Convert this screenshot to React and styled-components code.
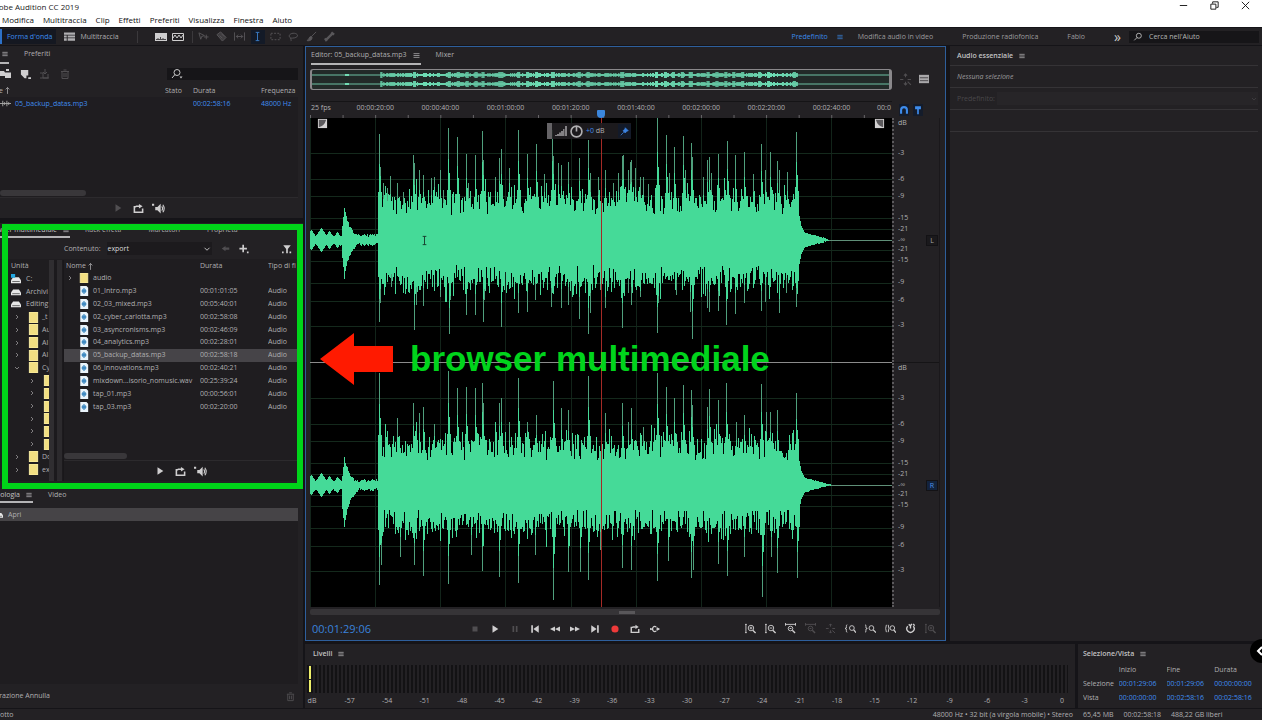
import React from "react";
import styled, { createGlobalStyle, css } from "styled-components";

const GlobalStyle = createGlobalStyle`
  * {
    box-sizing: border-box;
  }

  body {
    margin: 0;
    background: #ffffff;
    font-family: "Open Sans", "Noto Sans", sans-serif;
    font-size: 7px;
    line-height: 12px;
    color: #b0afb1;
  }

  button, input, select {
    margin: 0;
    padding: 0;
    border: 0;
    background: none;
    color: inherit;
    font: inherit;
  }

  table {
    border-collapse: collapse;
    table-layout: fixed;
    width: 100%;
  }

  th, td {
    padding: 0;
    font-weight: normal;
    text-align: left;
    white-space: nowrap;
    overflow: hidden;
  }

  svg {
    display: block;
    flex: none;
  }
`;

/* ---------- icons ---------- */

const shapes = {
  menu: <path d="M2 3.5h8M2 6h8M2 8.5h8" />,
  play: <path d="M3 1.5v9L10 6z" fill="currentColor" stroke="none" />,
  stop: <path d="M3 3h6v6H3z" fill="currentColor" stroke="none" />,
  pause: <path d="M3 2.5h2v7H3zM7 2.5h2v7H7z" fill="currentColor" stroke="none" />,
  first: <path d="M1.500 1.500h2v9h-2zM10.500 1.500v9L4 6z" fill="currentColor" stroke="none" />,
  last: <path d="M8.500 1.500h2v9h-2zM1.500 1.500v9L8 6z" fill="currentColor" stroke="none" />,
  rewind: <path d="M6 3v6L0 6zM12 3v6L6 6z" fill="currentColor" stroke="none" />,
  forward: <path d="M0 3v6l6-3zM6 3v6l6-3z" fill="currentColor" stroke="none" />,
  record: <circle cx="6" cy="6" r="4.3" fill="#ee3a3a" stroke="none" />,
  loop: (
    <>
      <path d="M3.500 4H1.500v6h9V6M3 3.500h4" strokeWidth="1.700" />
      <path d="M6.500 1l4 2.500-4 2.500z" fill="currentColor" stroke="none" />
    </>
  ),
  skip: (
    <>
      <path d="M1 6h3M8 6h3M7.500 3.500A3 3 0 1 0 7.500 8.500" strokeWidth="1.500" />
      <path d="M8 3.500L12 6 8 8.500zM0 4.500L2.500 6 0 7.500z" fill="currentColor" stroke="none" />
    </>
  ),
  speaker: (
    <>
      <path d="M3 4.500h2L8 1.500v9L5 7.500H3zM0 1.500h2v2H0z" fill="currentColor" stroke="none" />
      <path d="M9 4q1.500 2 0 4M10 2.500q2.500 3.500 0 7" />
    </>
  ),
  search: (
    <>
      <circle cx="7" cy="4.500" r="3" />
      <path d="M5 6.500L1.500 10" />
    </>
  ),
  searchMore: (
    <>
      <circle cx="6" cy="4.500" r="3" />
      <path d="M4 6.500L1 10" />
      <path d="M8.500 8.500h3L10 10.500z" fill="currentColor" stroke="none" />
    </>
  ),
  open: <path d="M0 3h4l1 1.500h6V10H5V8H0zM6 1h3v2H6z" fill="currentColor" stroke="none" />,
  addFile: <path d="M1 1h8v6H7v3H5L1 6zM9 9h3v2H9z" fill="currentColor" stroke="none" />,
  insert: <path d="M1 5h3v5h5V6M6 1v5M4 4l2 2 2-2M1 10h9" />,
  trash: <path d="M2 3.500h8M3 3.500v7h6v-7M4.500 2h3M5 5v4M7 5v4" />,
  multitrack: (
    <path d="M0 1.500h12v2.500H0zM0 5h3v2H0zM4 5h8v2H4zM0 8h3v2.500H0zM4 8h8v2.500H4z" fill="currentColor" stroke="none" />
  ),
  spectral: (
    <>
      <path d="M0 2h12v8H0z" fill="#cfcecf" stroke="none" />
      <path d="M1 8.500h10M3 7v2M5.500 6v3M8 7v2" stroke="#4a484b" />
    </>
  ),
  pitch: <path d="M.5 2.500h11v7H.5zM1 7l2-3 2 3 2-3 2 3 2-3" />,
  move: <path d="M1 2l6 3-3 1-1 3zM9 4v5M6.500 6.500h5" />,
  razor: <path d="M1 4l4-3 6 6-4 4zM4 5l3 3M6 3l3 3" fill="currentColor" fillOpacity=".5" />,
  slip: <path d="M.5 1.500v9M11.500 1.500v9M2.500 6h7M4.500 4l-2 2 2 2M7.500 4l2 2-2 2" />,
  beam: <path d="M4 1.500h4M4 10.500h4M6 1.500v9" />,
  marquee: <path d="M1 2.500h10v7H1z" strokeDasharray="2 1.500" />,
  lasso: <path d="M3 8C-1 5 3 2 7 2.500s5 4 0 5S3 6.500 3 8s1 2 0 3" />,
  brush: <path d="M11 1L5.500 6.500M5.500 6C3 6 4 9 1 10.500c3 .5 6-.5 5.500-4" fill="currentColor" />,
  heal: <path d="M2 10l8-8M1 8l2 3M8 1.500L11 4" strokeWidth="2.500" />,
  down: <path d="M3 4.500l3 3 3-3" />,
  right: <path d="M4.500 3l3 3-3 3" />,
  back: <path d="M11 4.500H6V2.500L1 6l5 3.500v-2h5z" fill="currentColor" stroke="none" />,
  plus: <path d="M5 1v9M.5 5.500h9M9.500 10h2" strokeWidth="2" />,
  filter: <path d="M1.500 1.500h9L7 6v5H5V6zM0 9h2v2H0zM9 9h2v2H9z" fill="currentColor" stroke="none" />,
  up: <path d="M6 10.500V2M3.500 4.500L6 2l2.500 2.500" />,
  zoomIn: (
    <>
      <path d="M1 1.500v9M0 1.500h2M0 10.500h2M5 5.500h3M6.500 4v3" />
      <circle cx="6.500" cy="5.500" r="3" />
      <path d="M8.500 8l3 3" strokeWidth="1.500" />
    </>
  ),
  zoomOut: (
    <>
      <path d="M1 1.500v9M0 1.500h2M0 10.500h2M5 5.500h3" />
      <circle cx="6.500" cy="5.500" r="3" />
      <path d="M8.500 8l3 3" strokeWidth="1.500" />
    </>
  ),
  zoomWide: (
    <>
      <path d="M0 1.500h12M.5 0v3M11.500 0v3M5 6h2" />
      <circle cx="6" cy="6" r="2.500" />
      <path d="M8 8l3 3" strokeWidth="1.500" />
    </>
  ),
  zoomFull: <path d="M6 1v3M6 8v3M1 6h3M8 6h3M4.500 2.500L6 1l1.500 1.500M4.500 9.500L6 11l1.500-1.500M8 8l3 3" />,
  zoomStart: (
    <>
      <path d="M2.500 2Q1 2 1.500 4T0 6q2 0 1.500 2t1 2" />
      <circle cx="7.500" cy="5.500" r="2.600" />
      <path d="M9.500 7.500l2.500 3" strokeWidth="1.500" />
    </>
  ),
  zoomEnd: (
    <>
      <path d="M0 2q1.500 0 1 2t1.500 2Q.5 6 1 8t-1 2" />
      <circle cx="7" cy="5.500" r="2.600" />
      <path d="M9 7.500l3 3" strokeWidth="1.500" />
    </>
  ),
  zoomSel: (
    <>
      <path d="M1.500 2q-1.500 4 0 8M3.500 2q1.500 4 0 8" />
      <circle cx="8" cy="5.500" r="2.500" />
      <path d="M9.500 7.500l2.500 3" strokeWidth="1.500" />
    </>
  ),
  timer: <path d="M3 3.500a4 4 0 1 0 6 0M6 2v4M4 1.500l2 1.500 1.500-2M9 1l1.500 2" strokeWidth="1.500" />,
  list: (
    <>
      <path d="M0 1h12v10H0z" fill="#a9a8aa" stroke="none" />
      <path d="M1 4.500h10M1 8h10" stroke="#3b393c" />
    </>
  ),
  magnet: <path d="M2.500 10.500V6a3.500 3.500 0 0 1 7 0v4.500" strokeWidth="2.500" />,
  marker: <path d="M2.500 1.500h7v3.500H7V11H5V5H2.500z" fill="currentColor" stroke="none" />,
  pin: <path d="M7 1l4 4-2 .5L7 8 4 5l2.500-2zM5 7l-4 4" fill="currentColor" />,
  knob: (
    <>
      <circle cx="6" cy="6" r="5" strokeWidth="1.500" />
      <path d="M6 1v5" strokeWidth="1.500" />
    </>
  ),
  bars: <path d="M0 10h2v1H0zM2 9h2v2H2zM4 7.500h2V11H4zM6 6h2v5H6zM8 4h1.500v7H8zM10 1h2v10h-2z" fill="#848285" stroke="none" />,
  clip: <path d="M0 6h12M3 3v6M5 4.500v3M7.500 3v6M9.500 4.500v3" />,
  fadeIn: (
    <>
      <path d="M1 1h10v10H1z" fill="#d4d2d3" stroke="none" />
      <path d="M2 10Q8 9 10 2H2z" fill="#5c5a5d" stroke="none" />
    </>
  ),
  fadeOut: (
    <>
      <path d="M1 1h10v10H1z" fill="#d4d2d3" stroke="none" />
      <path d="M10 10Q4 9 2 2h8z" fill="#5c5a5d" stroke="none" />
    </>
  ),
  folder: <path d="M1.500 0h9v12h-9z" fill="#f2df82" stroke="#fff3a8" />,
  sound: (
    <>
      <path d="M1.500 0h7.500l2 2v10H1.500z" fill="#eaf4fb" stroke="none" />
      <path d="M3 6h6M4.500 4v4M6 2.500v7M7.500 4v4" stroke="#3181bd" strokeWidth="1.300" />
    </>
  ),
  disk: (
    <>
      <path d="M2.500 3h7L12 6.500V10H0V6.500z" fill="#e7e7e7" stroke="none" />
      <path d="M1.500 8h9" stroke="#555" />
    </>
  ),
  system: (
    <>
      <path d="M2.500 4h7L12 7.500V11H0V7.500z" fill="#e7e7e7" stroke="none" />
      <path d="M1.500 9h9" stroke="#555" />
      <path d="M0 0h5v4.500H0z" fill="#22a7e0" stroke="none" />
    </>
  ),
  minimize: <path d="M2 6h8" />,
  restore: <path d="M2 4.500h5.500V10H2zM4 4V2h6v6H8" />,
  close: <path d="M2 2l8 8M10 2l-8 8" />,
};

function Icon({ name, size = 12 }) {
  return (
    <svg width={size} height={size} viewBox="0 0 12 12" fill="none" stroke="currentColor" aria-hidden="true">
      {shapes[name]}
    </svg>
  );
}

/* ---------- waveform data ---------- */

// [x, height] pairs of the loud peaks, measured from the left edge
const peaksLeftUp = [
  [69, 106], [70, 73], [73, 57], [77, 52], [80, 64], [87, 57], [93, 48], [103, 85], [104, 77], [109, 70], [113, 65],
  [121, 62], [124, 63], [130, 70], [133, 50], [138, 112], [147, 103], [156, 86], [158, 57], [165, 85], [172, 109],
  [173, 80], [185, 63], [189, 82], [191, 91], [199, 72], [208, 110], [217, 86], [226, 96], [234, 66], [242, 110],
  [243, 84], [248, 77], [251, 75], [258, 78], [269, 82], [278, 100], [280, 67], [288, 63], [295, 70], [303, 57],
  [308, 67], [312, 84], [320, 78], [325, 72], [313, 85], [318, 70], [321, 80], [330, 63], [333, 63], [338, 56],
  [347, 122], [356, 105], [359, 67], [364, 93], [373, 104], [375, 70], [381, 97], [382, 83], [393, 63], [397, 80],
  [399, 83], [401, 67], [408, 86], [417, 99], [425, 85], [434, 88], [443, 66], [451, 96], [455, 70], [460, 88],
  [467, 79], [469, 70], [477, 68], [486, 108],
];
const peaksLeftDown = [
  [69, 82], [70, 63], [81, 47], [104, 90], [106, 65], [113, 66], [130, 57], [139, 94], [140, 60], [156, 75],
  [165, 75], [173, 82], [174, 60], [191, 87], [208, 73], [217, 72], [225, 60], [241, 67], [251, 68], [258, 65],
  [269, 79], [278, 94], [280, 73], [290, 50], [295, 68], [312, 88], [318, 53], [321, 65], [330, 57], [347, 93],
  [348, 63], [366, 55], [380, 72], [382, 99], [397, 68], [399, 72], [408, 71], [416, 85], [425, 74], [434, 63],
  [451, 71], [455, 62], [469, 73], [476, 53], [486, 67],
];
const peaksRightUp = [
  [69, 112], [70, 65], [87, 67], [103, 82], [109, 72], [113, 78], [124, 61], [138, 114], [147, 97], [156, 98],
  [165, 97], [172, 102], [173, 82], [189, 82], [191, 87], [199, 63], [208, 107], [217, 63], [226, 70], [243, 104],
  [251, 77], [258, 75], [278, 109], [295, 72], [312, 82], [318, 63], [321, 77], [333, 58], [347, 112], [356, 98],
  [364, 87], [373, 100], [381, 95], [382, 80], [397, 78], [399, 96], [408, 85], [416, 102], [426, 63], [434, 70],
  [451, 101], [456, 73], [460, 73], [467, 75], [486, 92],
];
const peaksRightDown = [
  [69, 100], [71, 80], [90, 72], [104, 80], [113, 91], [138, 99], [161, 70], [172, 86], [189, 92], [208, 98],
  [225, 70], [243, 115], [258, 87], [270, 87], [278, 95], [290, 65], [312, 83], [321, 85], [347, 96], [358, 76],
  [381, 93], [383, 85], [408, 79], [417, 91], [434, 72], [452, 112], [461, 72], [467, 88], [487, 93],
];

function makeRandom(seed) {
  let s = seed;
  return () => {
    s = (s * 16807) % 2147483647;
    return s / 2147483647;
  };
}

function tailHeight(x, noise) {
  if (x < 491) return 24 - (x - 489) * 5;
  if (x < 494) return 14 - (x - 491) * 2;
  return Math.max(0, 7 - (x - 494) * 0.28 + noise);
}

function introHeight(x, burst, noise) {
  let h = 3 + noise * 3;
  [[1, 10], [11, 12], [19, 9], [27, 8], [54, 6], [62, 6]].forEach(([at, top]) => {
    h = Math.max(h, top - Math.abs(x - at) * 1.5);
  });
  if (x > 31 && x < 50) {
    const d = x - 34;
    h = Math.max(h, d < 0 ? burst + d * 9 : burst / (1 + d * 0.22) - d * 0.5 + noise * 3);
  }
  return h;
}

function buildHalf(peaks, seed, burst) {
  const rand = makeRandom(seed);
  const body = [];
  for (let x = 0; x < 522; x++) {
    let h;
    if (x < 69) {
      h = introHeight(x, burst, rand());
    } else if (x < 489) {
      h = 25 + rand() * 21;
      if (rand() > 0.7) h += 8;
      if (rand() > 0.86) h += 10;
    } else {
      h = tailHeight(x, rand());
    }
    body.push(h);
  }
  // small shoulders round every peak
  peaks.forEach(([x, h]) => {
    body[x - 1] = Math.max(body[x - 1], h * 0.45);
    body[x + 1] = Math.max(body[x + 1], h * 0.6);
    body[x + 2] = Math.max(body[x + 2], h * 0.45);
    body[x] = Math.max(body[x], h * 0.72);
  });
  return body;
}

const channels = [
  {
    mid: 122,
    up: buildHalf(peaksLeftUp, 11, 32),
    down: buildHalf(peaksLeftDown, 23, 36),
    peaksUp: peaksLeftUp,
    peaksDown: peaksLeftDown,
  },
  {
    mid: 367,
    up: buildHalf(peaksRightUp, 37, 27),
    down: buildHalf(peaksRightDown, 53, 42),
    peaksUp: peaksRightUp,
    peaksDown: peaksRightDown,
  },
];

const gridRows = [35, 61, 78, 100, 111, 132, 143, 165, 183, 208];
const gridCols = [0, 65, 130, 195, 261, 326, 391, 456, 521];

function Waveform() {
  return (
    <WaveSvg viewBox="0 0 582 489" preserveAspectRatio="none" shapeRendering="crispEdges">
      {gridCols.map((x) => (
        <path key={x} d={`M${x + 0.5} 0V489`} stroke="#12241a" />
      ))}
      {channels.map((c) => (
        <g key={c.mid}>
          {gridRows.map((y) => (
            <path key={y} d={`M0 ${c.mid - 122 + y + 0.5}H582`} stroke="#14291c" />
          ))}
          <path d={`M0 ${c.mid + 0.5}H582`} stroke="#5f8f78" />
          <path
            d={
              c.peaksUp.map(([x, h]) => `M${x + 0.5} ${c.mid}v${-h}`).join("") +
              c.peaksDown.map(([x, h]) => `M${x + 0.5} ${c.mid}v${h}`).join("")
            }
            stroke="#4f9f7c"
          />
          <path
            d={c.up.map((h, x) => `M${x + 0.5} ${c.mid - Math.round(h)}V${c.mid + Math.round(c.down[x])}`).join("")}
            stroke="#45da98"
          />
        </g>
      ))}
      <path d="M0 244.500H582" stroke="#8b8b8b" />
    </WaveSvg>
  );
}

function Overview() {
  const rand = makeRandom(7);
  const bars = [];
  for (let x = 69; x < 490; x++) {
    const near = channels[0].peaksUp.some(([p, h]) => h > 80 && Math.abs(p - x) < 2);
    const h = near ? 3 : 1 + Math.round(rand());
    bars.push(`M${x + 0.5} ${5 - h}v${h * 2}M${x + 0.5} ${14 - h}v${h * 2}`);
  }
  return (
    <OverviewSvg viewBox="0 0 582 19" preserveAspectRatio="none" shapeRendering="crispEdges">
      <path d="M0 5H582M0 14H582" stroke="#6ec3a4" />
      <path d="M33 4h4v2h-4zM33 13h4v2h-4z" fill="#72dcb4" />
      <path d={bars.join("")} stroke="#6fe0b6" />
    </OverviewSvg>
  );
}

/* ---------- page data ---------- */

const menus = ["Modifica", "Multitraccia", "Clip", "Effetti", "Preferiti", "Visualizza", "Finestra", "Aiuto"];

const files = [
  ["01_Intro.mp3", "00:01:01:05"],
  ["02_03_mixed.mp3", "00:05:40:01"],
  ["02_cyber_carlotta.mp3", "00:02:58:08"],
  ["03_asyncronisms.mp3", "00:02:46:09"],
  ["04_analytics.mp3", "00:02:28:01"],
  ["05_backup_datas.mp3", "00:02:58:18"],
  ["06_innovations.mp3", "00:02:40:21"],
  ["mixdown...isorio_nomusic.wav", "00:25:39:24"],
  ["tap_01.mp3", "00:00:56:01"],
  ["tap_03.mp3", "00:02:20:00"],
];

const tree = [
  ["system", "C:", 0],
  ["disk", "Archivi", 0],
  ["disk", "Editing", 0],
  ["folder", "_t", 1],
  ["folder", "Au", 1],
  ["folder", "Al", 1],
  ["folder", "Al", 1],
  ["folder", "Cy", 1, true],
  ["folder", "", 2],
  ["folder", "", 2],
  ["folder", "", 2],
  ["folder", "", 2],
  ["folder", "", 2],
  ["folder", "", 2],
  ["folder", "Do", 1],
  ["folder", "ex", 1],
];

const times = [
  "00:00:20:00", "00:00:40:00", "00:01:00:00", "00:01:20:00",
  "00:01:40:00", "00:02:00:00", "00:02:20:00", "00:02:40:00",
];

// label and the space down to the next one
const decibels = [
  ["", 5], ["dB", 30], ["-3", 26], ["-6", 17], ["-9", 22], ["-15", 11], ["-21", 11], ["-∞", 10],
  ["-21", 11], ["-15", 22], ["-9", 18], ["-6", 25], ["-3", 37],
];

const levels = ["dB"];
for (let v = -57; v <= 0; v += 3) levels.push(String(v));

/* ---------- sections ---------- */

function FilesPanel() {
  return (
    <Panel>
      <Tabs>
        <Tab $active $lead={9}><Icon name="menu" size={8} /></Tab>
        <Tab>Preferiti</Tab>
      </Tabs>
      <FileTools>
        <IconButton aria-label="Apri file"><Icon name="open" /></IconButton>
        <IconButton aria-label="Nuovo file"><Icon name="addFile" size={11} /></IconButton>
        <IconButton aria-label="Inserisci" $dim><Icon name="insert" /></IconButton>
        <IconButton aria-label="Elimina" $dim><Icon name="trash" /></IconButton>
        <SearchBox>
          <Icon name="searchMore" />
          <input aria-label="Cerca file" />
        </SearchBox>
      </FileTools>
      <FilesTable>
        <colgroup>
          <col />
          <col width="28" />
          <col width="68" />
          <col width="37" />
        </colgroup>
        <thead>
          <tr>
            <th><LeadText $width={12}>Nome <Icon name="up" size={9} /></LeadText></th>
            <th>Stato</th>
            <th>Durata</th>
            <th>Frequenza</th>
          </tr>
        </thead>
        <tbody>
          <tr>
            <td><FileName><Icon name="clip" size={11} />05_backup_datas.mp3</FileName></td>
            <td />
            <td>00:02:58:16</td>
            <td>48000 Hz</td>
          </tr>
        </tbody>
      </FilesTable>
      <FilesSpace />
      <ScrollTrack><ScrollThumb $width="29%" /></ScrollTrack>
      <Preview $start={108} $off />
    </Panel>
  );
}

function Preview({ $start, $off }) {
  return (
    <PreviewBar $start={$start}>
      <IconButton aria-label="Riproduci" $dim={$off}><Icon name="play" size={10} /></IconButton>
      <IconButton aria-label="Ciclo"><Icon name="loop" size={11} /></IconButton>
      <IconButton aria-label="Riproduzione automatica"><Icon name="speaker" size={13} /></IconButton>
    </PreviewBar>
  );
}

function MediaBrowser() {
  return (
    <MediaPanel>
      <Tabs $short>
        <Tab $active $lead={70}>Browser multimediale<Icon name="menu" size={8} /></Tab>
        <Tab>Rack effetti</Tab>
        <Tab $wide>Marcatori</Tab>
        <Tab $wide>Proprietà</Tab>
      </Tabs>
      <ContentBar>
        <label htmlFor="content">Contenuto:</label>
        <ContentSelect>
          <select id="content" defaultValue="export"><option>export</option></select>
          <Icon name="down" size={10} />
        </ContentSelect>
        <IconButton aria-label="Indietro" $dim><Icon name="back" size={9} /></IconButton>
        <IconButton aria-label="Aggiungi"><Icon name="plus" size={10} /></IconButton>
        <FilterButton aria-label="Filtra"><Icon name="filter" size={10} /></FilterButton>
      </ContentBar>
      <MediaBody>
        <Tree>
          <TreeRow $depth={0}>Unità</TreeRow>
          {tree.map(([icon, name, depth, open], i) => (
            <TreeRow key={i} $depth={depth}>
              {depth > 0 && <Icon name={open ? "down" : "right"} size={8} />}
              <Icon name={icon} size={depth ? 11 : 10} />
              <span>{name}</span>
            </TreeRow>
          ))}
        </Tree>
        <Splitter><i /></Splitter>
        <MediaList>
          <MediaTable>
            <colgroup>
              <col />
              <col width="68" />
              <col width="29" />
            </colgroup>
            <thead>
              <tr>
                <th><NameHead>Nome<Icon name="up" size={9} /></NameHead></th>
                <th>Durata</th>
                <th>Tipo di fi</th>
              </tr>
            </thead>
            <tbody>
              <tr>
                <td><MediaName><Icon name="right" size={8} /><Icon name="folder" size={10} />audio</MediaName></td>
                <td />
                <td />
              </tr>
              {files.map(([name, length], i) => (
                <MediaRow key={name} $selected={i === 5}>
                  <td><MediaName $file><Icon name="sound" size={10} />{name}</MediaName></td>
                  <td>{length}</td>
                  <td>Audio</td>
                </MediaRow>
              ))}
            </tbody>
          </MediaTable>
          <MediaSpace />
          <ScrollTrack><ScrollThumb $width="27%" /></ScrollTrack>
          <Preview $start={86} />
        </MediaList>
      </MediaBody>
      <GreenFrame />
    </MediaPanel>
  );
}

function History() {
  return (
    <HistoryPanel>
      <Tabs $short>
        <Tab $active $lead={33}>Cronologia<Icon name="menu" size={8} /></Tab>
        <Tab>Video</Tab>
      </Tabs>
      <HistoryList>
        <HistoryItem><LeadText $width={3}><Icon name="disk" size={8} /></LeadText>Apri</HistoryItem>
      </HistoryList>
      <HistoryFoot>
        <LeadText $width={50}>Operazione Annulla</LeadText>
        <IconButton aria-label="Elimina cronologia" $dim><Icon name="trash" size={11} /></IconButton>
      </HistoryFoot>
    </HistoryPanel>
  );
}

const transport = [
  ["stop", "Arresta", true], ["play", "Riproduci"], ["pause", "Pausa", true], ["first", "Inizio"],
  ["rewind", "Riavvolgi"], ["forward", "Avanti veloce"], ["last", "Fine"], ["record", "Registra"],
  ["loop", "Riproduzione ciclica"], ["skip", "Salta selezione"],
];

const zooms = [
  ["zoomIn", "Zoom avanti"], ["zoomOut", "Zoom indietro"], ["zoomWide", "Zoom tempo"], ["zoomWide", "Zoom tempo indietro", true],
  ["zoomFull", "Zoom completo", true], ["zoomStart", "Zoom punto iniziale"], ["zoomEnd", "Zoom punto finale"],
  ["zoomSel", "Zoom selezione"], ["timer", "Zoom temporizzato"], ["zoomIn", "Zoom traccia", true],
];

function Editor() {
  return (
    <EditorPanel>
      <Tabs>
        <EditorTab $active>Editor: 05_backup_datas.mp3<Icon name="menu" size={9} /></EditorTab>
        <EditorTab>Mixer</EditorTab>
      </Tabs>
      <OverviewRow>
        <OverviewBox><Overview /></OverviewBox>
        <EditorSide $gap={7}>
          <IconButton aria-label="Adatta" $dim><Icon name="zoomFull" size={13} /></IconButton>
          <IconButton aria-label="Elenco"><Icon name="list" size={10} /></IconButton>
        </EditorSide>
      </OverviewRow>
      <TimeRow>
        <TimeRuler>
          <TimeStart>25 fps</TimeStart>
          {times.map((t) => <TimeMark key={t}>{t}</TimeMark>)}
          <TimeEnd>00:0</TimeEnd>
          <PlayheadTop />
        </TimeRuler>
        <EditorSide $gap={4} $blue>
          <BlueButton aria-label="Aggancia"><Icon name="magnet" size={10} /></BlueButton>
          <BlueButton aria-label="Marcatore"><Icon name="marker" size={10} /></BlueButton>
        </EditorSide>
      </TimeRow>
      <WaveRow>
        <WaveBox>
          <Waveform />
          <Playhead />
          <FadeHandle $side="left"><Icon name="fadeIn" size={11} /></FadeHandle>
          <FadeHandle $side="right"><Icon name="fadeOut" size={11} /></FadeHandle>
          <Hud>
            <HudGrip />
            <Icon name="bars" />
            <Icon name="knob" size={13} />
            <span><b>+0</b> dB</span>
            <HudPin aria-label="Blocca"><Icon name="pin" size={9} /></HudPin>
          </Hud>
          <Cursor><Icon name="beam" size={11} /></Cursor>
          <Note>
            <svg width="73" height="52" viewBox="0 0 73 52">
              <path d="M0 26L34 0v13h39v26H34v13z" fill="#ff1a00" />
            </svg>
            browser multimediale
          </Note>
        </WaveBox>
        <ScaleSide>
          {["L", "R"].map((side) => (
            <ScaleChannel key={side}>
              <Scale>
                {decibels.map(([label, space], i) => <ScaleMark key={i} $space={space}>{label}</ScaleMark>)}
              </Scale>
              <ChannelButton $on={side === "R"}>{side}</ChannelButton>
            </ScaleChannel>
          ))}
        </ScaleSide>
      </WaveRow>
      <WaveScroll><i /></WaveScroll>
      <TransportRow>
        <Clock>00:01:29:06</Clock>
        <ButtonGroup>
          {transport.map(([icon, label, dim]) => (
            <IconButton key={label} aria-label={label} $dim={dim} $cell><Icon name={icon} size={10} /></IconButton>
          ))}
        </ButtonGroup>
        <ButtonGroup $end>
          {zooms.map(([icon, label, dim]) => (
            <IconButton key={label} aria-label={label} $dim={dim} $cell><Icon name={icon} size={11} /></IconButton>
          ))}
        </ButtonGroup>
      </TransportRow>
    </EditorPanel>
  );
}

function Essential() {
  return (
    <EssentialPanel>
      <PanelTitle>Audio essenziale<Icon name="menu" size={8} /></PanelTitle>
      <EssentialLine $italic>Nessuna selezione</EssentialLine>
      <EssentialLine $faint>
        <label htmlFor="preset">Predefinito:</label>
        <PresetSelect>
          <select id="preset" disabled><option></option></select>
          <Icon name="down" size={8} />
        </PresetSelect>
      </EssentialLine>
      <EssentialLine />
      <EssentialLine />
    </EssentialPanel>
  );
}

function App() {
  return (
    <Window>
      <GlobalStyle />
      <TitleBar>
        <LeadText $width={79}>Adobe Audition CC 2019</LeadText>
        <WindowButtons>
          <button aria-label="Riduci a icona"><Icon name="minimize" size={11} /></button>
          <button aria-label="Ripristina"><Icon name="restore" size={11} /></button>
          <button aria-label="Chiudi"><Icon name="close" size={11} /></button>
        </WindowButtons>
      </TitleBar>
      <MenuBar>{menus.map((m) => <button key={m}>{m}</button>)}</MenuBar>
      <Program>
        <Toolbar>
          <ModeButton $active>Forma d'onda</ModeButton>
          <ModeButton><Icon name="multitrack" size={11} />Multitraccia</ModeButton>
          <Divider $gap={14} />
          <ViewTools>
            <IconButton aria-label="Frequenza spettrale"><Icon name="spectral" /></IconButton>
            <IconButton aria-label="Tono spettrale"><Icon name="pitch" /></IconButton>
          </ViewTools>
          <Divider $gap={0} />
          {["move", "razor", "slip", "beam", "marquee", "lasso", "brush", "heal"].map((t) => (
            <ToolButton key={t} aria-label={t} $active={t === "beam"}><Icon name={t} size={11} /></ToolButton>
          ))}
          <Workspaces>
            <WorkButton $active>Predefinito<Icon name="menu" size={8} /></WorkButton>
            <WorkButton>Modifica audio in video</WorkButton>
            <WorkButton>Produzione radiofonica</WorkButton>
            <WorkButton>Fabio</WorkButton>
            <MoreButton>»</MoreButton>
            <HelpSearch>
              <Icon name="search" size={10} />
              <input aria-label="Cerca" placeholder="Cerca nell'Aiuto" />
            </HelpSearch>
          </Workspaces>
        </Toolbar>
        <Main>
          <LeftColumn>
            <FilesPanel />
            <MediaBrowser />
            <History />
          </LeftColumn>
          <RightColumn>
            <UpperRow>
              <Editor />
              <Essential />
            </UpperRow>
            <LowerRow>
              <LevelsPanel>
                <PanelTitle>Livelli<Icon name="menu" size={8} /></PanelTitle>
                <Meter><i /><i /></Meter>
                <LevelScale>{levels.map((l) => <span key={l}>{l}</span>)}</LevelScale>
              </LevelsPanel>
              <SelectionPanel>
                <PanelTitle>Selezione/Vista<Icon name="menu" size={8} /></PanelTitle>
                <SelectionTable>
                  <thead>
                    <tr><td /><th>Inizio</th><th>Fine</th><th>Durata</th></tr>
                  </thead>
                  <tbody>
                    <tr><th>Selezione</th><td>00:01:29:06</td><td>00:01:29:06</td><td>00:00:00:00</td></tr>
                    <tr><th>Vista</th><td>00:00:00:00</td><td>00:02:58:16</td><td>00:02:58:16</td></tr>
                  </tbody>
                </SelectionTable>
              </SelectionPanel>
            </LowerRow>
          </RightColumn>
        </Main>
        <Status>
          <span>otto</span>
          <span>48000 Hz • 32 bit (a virgola mobile) • Stereo</span>
          <StatusEnd>
            <span>65,45 MB</span>
            <span>00:02:58:18</span>
            <span>488,22 GB liberi</span>
          </StatusEnd>
        </Status>
        <SideHandle aria-label="Apri pannello">
          <svg width="8" height="12" viewBox="0 0 8 12" fill="none" stroke="#fff" strokeWidth="2">
            <path d="M7 2L3 6l4 4" />
          </svg>
        </SideHandle>
      </Program>
    </Window>
  );
}

/* ---------- styles ---------- */

const Window = styled.div`
  display: flex;
  flex-direction: column;
  min-height: 100vh;
  overflow: hidden;
`;

const LeadText = styled.span`
  display: flex;
  flex: none;
  align-items: center;
  justify-content: flex-end;
  width: ${(p) => p.$width}px;
  overflow: hidden;
  white-space: nowrap;
`;

const TitleBar = styled.div`
  display: flex;
  justify-content: space-between;
  height: 13px;
  font-size: 8px;
  line-height: 11px;
  color: #222;
`;

const WindowButtons = styled.div`
  display: flex;
  gap: 20px;
  padding-right: 29px;
  color: #111;

  button {
    display: flex;
    align-items: center;
    height: 11px;
  }
`;

const MenuBar = styled.nav`
  display: flex;
  gap: 9px;
  height: 14px;
  padding-left: 2px;
  font-size: 8px;
  color: #111;
`;

const Program = styled.div`
  position: relative;
  display: flex;
  flex-direction: column;
  flex: 1;
  margin-right: 18px;
  background: #151418;
  overflow: hidden;
`;

const Toolbar = styled.div`
  display: flex;
  align-items: center;
  height: 18px;
  background: #232124;
  border-top: 1px solid #151418;
  white-space: nowrap;
`;

const ModeButton = styled.button`
  display: flex;
  align-items: center;
  gap: 5px;
  height: 15px;
  padding: 0 4px 0 7px;
  ${(p) => p.$active && css`
    background: #151821;
    border-left: 2px solid #2d71c8;
    color: #3b8cf0;
    padding-left: 5px;
    margin-right: 1px;
  `}
`;

const Divider = styled.div`
  width: 1px;
  height: 12px;
  margin-left: ${(p) => p.$gap}px;
  background: #3b393c;
`;

const ViewTools = styled.div`
  display: flex;
  gap: 5px;
  padding: 0 8px 0 17px;
`;

const ToolButton = styled.button`
  display: flex;
  align-items: center;
  justify-content: center;
  width: 14px;
  height: 14px;
  margin-left: 4px;
  color: #59575a;
  ${(p) => p.$active && css`
    background: #131a27;
    color: #3b7fca;
  `}
`;

const Workspaces = styled.div`
  display: flex;
  align-items: center;
  margin-left: auto;
  padding-right: 3px;
`;

const WorkButton = styled.button`
  display: flex;
  align-items: center;
  gap: 8px;
  margin-right: ${(p) => (p.$active ? 14 : 29)}px;
  color: ${(p) => (p.$active ? "#3b8bea" : "#9c9b9d")};
`;

const MoreButton = styled.button`
  margin-right: 8px;
  font-size: 14px;
  line-height: 14px;
  color: #cccccc;
`;

const SearchBox = styled.label`
  display: flex;
  align-items: center;
  flex: 1;
  height: 12px;
  margin-left: 88px;
  padding-left: 4px;
  background: #161518;
  color: #c8c8c8;

  input {
    flex: 1;
    min-width: 0;
    outline: 0;
  }
`;

const HelpSearch = styled(SearchBox)`
  flex: 0 0 130px;
  margin-left: 0;
  gap: 6px;

  input::placeholder {
    color: #b5b5b5;
    opacity: 1;
  }
`;

const IconButton = styled.button`
  display: flex;
  align-items: center;
  justify-content: center;
  width: ${(p) => (p.$cell ? "20px" : "auto")};
  color: ${(p) => (p.$dim ? "#504e51" : "#cfcecf")};
`;

const Main = styled.div`
  display: flex;
  flex: 1;
  gap: 2px;
  padding-top: 1px;
`;

const LeftColumn = styled.div`
  display: flex;
  flex-direction: column;
  flex: 0 0 303px;
  min-width: 0;
`;

const RightColumn = styled.div`
  display: flex;
  flex: 1;
  flex-direction: column;
  gap: 3px;
  min-width: 0;
`;

const Panel = styled.section`
  display: flex;
  flex-direction: column;
  padding-right: 5px;
  margin-bottom: 5px;
  background: #232124;
`;

const Tabs = styled.div`
  display: flex;
  height: ${(p) => (p.$short ? 15 : 18)}px;
`;

const Tab = styled.button`
  display: flex;
  align-items: center;
  justify-content: flex-end;
  gap: 5px;
  height: 100%;
  margin-left: ${(p) => (p.$active ? 0 : p.$wide ? 27 : 15)}px;
  border-bottom: 2px solid ${(p) => (p.$active ? "#b5b4b6" : "transparent")};
  white-space: nowrap;
  ${(p) => p.$lead && css`
    flex: none;
    width: ${p.$lead}px;
    overflow: hidden;
    color: #c4c3c5;
  `}
`;

const FileTools = styled.div`
  display: flex;
  align-items: center;
  gap: 8px;
  height: 20px;
`;

const FilesTable = styled.table`
  th {
    height: 13px;
  }

  td {
    height: 13px;
    background: #1f1d21;
    color: #3f8df0;
  }
`;

const FileName = styled.span`
  display: flex;
  align-items: center;
  gap: 4px;

  svg {
    color: #aaa;
  }
`;

const FilesSpace = styled.div`
  height: 80px;
  background: #1f1d20;
`;

const ScrollTrack = styled.div`
  height: 7px;
  background: #1f1d20;
`;

const ScrollThumb = styled.div`
  width: ${(p) => p.$width};
  height: 6px;
  border-radius: 3px;
  background: #39373a;
`;

const PreviewBar = styled.div`
  display: flex;
  align-items: center;
  gap: 10px;
  height: 21px;
  padding-left: ${(p) => p.$start + 5}px;
  border-top: 1px solid #2c2a2d;

  button + button + button {
    margin-left: -2px;
  }
`;

const MediaPanel = styled(Panel)`
  position: relative;
  padding: 0 6px 7px 0;
  margin: 0;
`;

const GreenFrame = styled.div`
  position: absolute;
  inset: 1px 0 -1px 2px;
  border: 6px solid #00d419;
  pointer-events: none;
`;

const ContentBar = styled.div`
  display: flex;
  align-items: center;
  gap: 9px;
  height: 21px;
  padding: 0 5px 0 64px;
`;

const ContentSelect = styled.div`
  display: flex;
  align-items: center;
  flex: 0 0 105px;
  height: 13px;
  margin-left: -2px;
  background: #1c1a1d;
  color: #dadada;

  select {
    flex: 1;
    appearance: none;
    outline: 0;
  }
`;

const FilterButton = styled(IconButton)`
  margin-left: auto;
`;

const MediaBody = styled.div`
  display: flex;
  padding-top: 1px;
  background: #1f1d20;
`;

const Tree = styled.div`
  display: flex;
  flex: 0 0 49px;
  flex-direction: column;
  height: 216px;
  padding-left: 11px;
  overflow: hidden;
`;

const TreeRow = styled.div`
  display: flex;
  flex: 1;
  align-items: center;
  gap: ${(p) => (p.$depth ? 3 : 5)}px;
  padding-left: ${(p) => (p.$depth === 2 ? 17 : p.$depth ? 2 : 0)}px;
  line-height: 12px;
  white-space: nowrap;

  svg + svg {
    margin-left: 4px;
  }
`;

const Splitter = styled.div`
  display: flex;
  justify-content: space-between;
  flex: 0 0 15px;
  border-left: 5px solid #302e31;
  border-right: 1px solid #19171a;
  background: #1c1a1d;

  i {
    width: 5px;
    margin-left: 3px;
    background: #2c2a2d;
  }
`;

const MediaList = styled.div`
  flex: 1;
  min-width: 0;
`;

const MediaTable = styled.table`
  height: 153px;
  border-collapse: separate;
  border-spacing: 0;

  th, td {
    height: 12px;
    line-height: 12px;
  }
`;

const MediaRow = styled.tr`
  background: ${(p) => (p.$selected ? "#464448" : "transparent")};
`;

const NameHead = styled.span`
  display: flex;
  align-items: center;
  padding-left: 2px;
`;

const MediaName = styled.span`
  display: flex;
  align-items: center;
  gap: 4px;
  padding-left: ${(p) => (p.$file ? 15 : 2)}px;

  svg + svg {
    margin-left: 1px;
  }
`;

const MediaSpace = styled.div`
  height: 40px;
`;

const HistoryPanel = styled(Panel)`
  flex: 1;
  margin: 0;
`;

const HistoryList = styled.div`
  flex: 1;
  margin-top: 5px;
  background: #1f1d20;
`;

const HistoryItem = styled.div`
  display: flex;
  align-items: center;
  gap: 5px;
  height: 13px;
  background: #464447;
`;

const HistoryFoot = styled.div`
  display: flex;
  align-items: center;
  justify-content: space-between;
  height: 24px;
  padding-right: 2px;
`;

const UpperRow = styled.div`
  display: flex;
  flex: 1;
  gap: 4px;
`;

const EditorPanel = styled.section`
  display: flex;
  flex: 1;
  flex-direction: column;
  min-width: 0;
  padding: 0 5px 0 4px;
  border: 1px solid #2e5f9c;
  background: #232124;
`;

const EditorTab = styled(Tab)`
  gap: 5px;
  margin-left: ${(p) => (p.$active ? 1 : 15)}px;
`;

const OverviewRow = styled.div`
  display: flex;
  align-items: center;
  height: 28px;
`;

const OverviewBox = styled.div`
  flex: 1;
  min-width: 0;
  border: 1px solid #8a888b;
  border-left-width: 2px;
  border-right-width: 3px;
  border-radius: 3px;
  background: #222a28;
`;

const OverviewSvg = styled.svg`
  width: 100%;
  height: 19px;
`;

const EditorSide = styled.div`
  display: flex;
  align-items: center;
  flex: 0 0 48px;
  gap: ${(p) => p.$gap}px;
  padding-left: 7px;
`;

const BlueButton = styled(IconButton)`
  padding: 1px 0;
  background: #141c2b;
  color: #3e8cec;
`;

const TimeRow = styled.div`
  display: flex;
  align-items: center;
  height: 25px;
  padding-top: 8px;
`;

const TimeRuler = styled.div`
  position: relative;
  display: flex;
  flex: 1;
  min-width: 0;
  height: 17px;
  border-top: 1px solid #151416;
  background: linear-gradient(90deg, #6a686b 1px, transparent 1px) 0 100% / 5.600% 3px repeat-x;
`;

const TimeStart = styled.div`
  flex: 56 0 0;
  text-indent: 1px;
  white-space: nowrap;
`;

const TimeMark = styled.div`
  flex: 112 0 0;
  min-width: 0;
  text-align: center;
`;

const TimeEnd = styled.div`
  flex: 48 0 0;
  min-width: 0;
  text-indent: 13px;
  overflow: hidden;
`;

const PlayheadTop = styled.div`
  position: absolute;
  bottom: 0;
  left: calc(50% - 4px);
  width: 8px;
  height: 8px;
  border-radius: 1px 1px 4px 4px;
  background: #3b86dc;
`;

const WaveRow = styled.div`
  display: flex;
  flex: 1;
`;

const WaveBox = styled.div`
  position: relative;
  flex: 1;
  min-width: 0;
  background: #000;
`;

const WaveSvg = styled.svg`
  position: absolute;
  width: 100%;
  height: 100%;
`;

const Playhead = styled.div`
  position: absolute;
  top: 0;
  bottom: 0;
  left: 50%;
  width: 1px;
  background: #a52a26;
`;

const FadeHandle = styled.div`
  position: absolute;
  top: 0;
  ${(p) => p.$side}: 7px;
`;

const Hud = styled.div`
  position: absolute;
  top: 5px;
  left: 237px;
  display: flex;
  align-items: center;
  gap: 3px;
  width: 84px;
  height: 16px;
  background: rgba(31, 29, 32, 0.9);

  b {
    font-weight: normal;
    color: #3f8cf0;
  }
`;

const HudGrip = styled.div`
  align-self: stretch;
  width: 5px;
  background: #656366;
`;

const HudPin = styled.button`
  display: flex;
  align-items: center;
  justify-content: center;
  width: 13px;
  height: 14px;
  margin-left: auto;
  background: #131a29;
  color: #3c82df;
`;

const Cursor = styled.div`
  position: absolute;
  top: 117px;
  left: 109px;
  color: #16382a;
`;

const Note = styled.div`
  position: absolute;
  top: 50%;
  left: 10px;
  display: flex;
  align-items: center;
  gap: 17px;
  margin-top: -30px;
  font: bold 35px/52px "Liberation Sans", Arial, sans-serif;
  color: #00d41c;
  white-space: nowrap;
`;

const ScaleSide = styled.div`
  display: flex;
  flex: 0 0 48px;
  flex-direction: column;
  border-right: 1px solid #1a181b;
`;

const ScaleChannel = styled.div`
  display: flex;
  align-items: center;
  flex: 1;

  & + & {
    border-top: 1px solid #151416;
  }
`;

const Scale = styled.div`
  display: flex;
  flex-direction: column;
  align-self: stretch;
  width: 34px;
  border-left: 2px dotted #5c5a5d;
`;

const ScaleMark = styled.div`
  flex: ${(p) => p.$space} 0 0;
  padding-left: 4px;
  line-height: 0;
`;

const ChannelButton = styled.button`
  width: 12px;
  height: 11px;
  border: 1px solid #131215;
  background: ${(p) => (p.$on ? "#13233c" : "#1a191c")};
  color: ${(p) => (p.$on ? "#4c93ea" : "#a5a5a5")};
  line-height: 9px;
`;

const WaveScroll = styled.div`
  display: flex;
  height: 6px;
  margin-top: 2px;
  border-radius: 2px;
  background: #363437;

  i {
    width: 16px;
    margin: 2px 0 1px 49%;
    background: #59575a;
  }
`;

const TransportRow = styled.div`
  display: flex;
  align-items: center;
  height: 25px;
  padding: 2px 0 0 2px;
`;

const Clock = styled.div`
  flex: 0 0 153px;
  font-size: 11px;
  color: #3a81dc;
`;

const ButtonGroup = styled.div`
  display: flex;
  margin-left: ${(p) => (p.$end ? "auto" : "0")};
`;

const EssentialPanel = styled.section`
  flex: 0 0 312px;
  padding-right: 4px;
  background: #232124;
`;

const PanelTitle = styled.h2`
  display: flex;
  align-items: center;
  gap: 5px;
  height: 19px;
  margin: 0;
  padding-left: 7px;
  font-size: 7px;
  font-weight: 600;
  color: #c2c1c3;
`;

const EssentialLine = styled.div`
  display: flex;
  align-items: center;
  gap: 2px;
  height: 22px;
  padding-left: 7px;
  border-top: 1px solid #353336;
  font-style: ${(p) => (p.$italic ? "italic" : "normal")};
  color: ${(p) => (p.$faint ? "#49474a" : "#9b9a9c")};
`;

const PresetSelect = styled.div`
  display: flex;
  align-items: center;
  flex: 1;
  height: 13px;
  background: #272528;

  select {
    flex: 1;
    appearance: none;
  }
`;

const LowerRow = styled.div`
  display: flex;
  gap: 3px;
`;

const LevelsPanel = styled.section`
  flex: 1;
  min-width: 0;
  padding: 0 7px 0 2px;
  background: #232124;

  ${PanelTitle} {
    padding-left: 6px;
  }
`;

const Meter = styled.div`
  display: flex;
  flex-direction: column;
  gap: 1px;
  height: 28px;
  margin-top: 2px;
  padding: 1px 2px;
  background: repeating-linear-gradient(90deg, #131214 0 2px, #232124 2px 4px);

  i {
    flex: 1;
    width: 2px;
    background: #eef06a;
  }
`;

const LevelScale = styled.div`
  display: flex;
  justify-content: space-between;
  height: 15px;
  padding: 2px 6px 0 5px;

  span {
    display: flex;
    justify-content: center;
    width: 0;
  }
`;

const SelectionPanel = styled.section`
  flex: 0 0 184px;
  background: #232124;

  ${PanelTitle} {
    padding-left: 5px;
  }
`;

const SelectionTable = styled.table`
  width: auto;
  margin-left: 5px;

  th, td {
    width: 48px;
    height: 14px;
  }

  th:first-child, td:first-child {
    width: 36px;
  }

  tbody td {
    color: #3f8df0;
  }
`;

const Status = styled.footer`
  display: flex;
  justify-content: space-between;
  height: 11px;
  margin-top: 1px;
  background: #232124;
  white-space: nowrap;

  > span + span {
    margin-left: auto;
    margin-right: 10px;
  }
`;

const StatusEnd = styled.div`
  display: flex;
  flex: 0 0 179px;
  gap: 10px;
`;

const SideHandle = styled.button`
  position: absolute;
  right: -12px;
  bottom: 57px;
  width: 24px;
  height: 24px;
  padding-left: 5px;
  border-radius: 12px;
  background: #000;
`;

export default App;
